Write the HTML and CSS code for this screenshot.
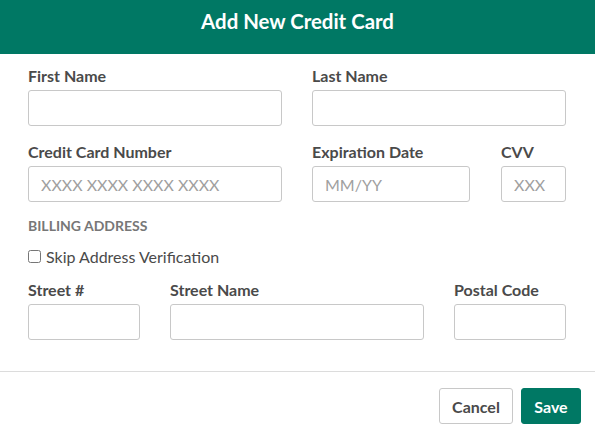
FILE: index.html
```html
<!DOCTYPE html>
<html>
<head>
<meta charset="utf-8">
<link rel="stylesheet" href="styles.css">
</head>
<body>
<div class="modal">
  <header class="modal-header">Add New Credit Card</header>
  <form class="modal-body">
    <div class="row">
      <div class="field w254"><label>First Name</label><input type="text"></div>
      <div class="field w254"><label>Last Name</label><input type="text"></div>
    </div>
    <div class="row">
      <div class="field w254"><label>Credit Card Number</label><input type="text" placeholder="XXXX XXXX XXXX XXXX"></div>
      <div class="field w158"><label>Expiration Date</label><input type="text" placeholder="MM/YY"></div>
      <div class="field w65 ml1"><label>CVV</label><input type="text" placeholder="XXX"></div>
    </div>
    <div class="section-title">BILLING ADDRESS</div>
    <label class="check"><input type="checkbox"><span>Skip Address Verification</span></label>
    <div class="row">
      <div class="field w112"><label>Street #</label><input type="text"></div>
      <div class="field w254"><label>Street Name</label><input type="text"></div>
      <div class="field w112"><label>Postal Code</label><input type="text"></div>
    </div>
  </form>
  <footer class="modal-footer">
    <button class="btn btn-default" type="button">Cancel</button>
    <button class="btn btn-primary" type="button">Save</button>
  </footer>
</div>
</body>
</html>
```
FILE: styles.css
```css
* { box-sizing: border-box; }
html, body { margin: 0; padding: 0; background: #fff; }
body { font-family: Lato, "Open Sans", sans-serif; color: #4a4a4a; }
.modal { width: 595px; }
.modal-header {
  height: 54px;
  background: #007864;
  color: #fff;
  font-weight: 700;
  font-size: 20.4px;
  display: flex;
  align-items: center;
  justify-content: center;
  padding-bottom: 12px;
}
.modal-body {
  margin: 0;
  padding: 12px 29px 31px 28px;
}
.row { display: flex; gap: 30px; }
.row + .row { margin-top: 16px; }
.field { display: flex; flex-direction: column; }
.field label {
  font-weight: 700;
  font-size: 16px;
  line-height: 20px;
  color: #4a4a4a;
  margin-bottom: 4px;
}
.field input {
  height: 36px;
  width: 100%;
  border: 1px solid #c8c8c8;
  border-radius: 3px;
  padding: 0 12px;
  font-family: Lato, sans-serif;
  font-size: 16px;
  color: #333;
  outline: none;
}
.field input::placeholder { color: #a0a0a0; }
.w254 { width: 254px; }
.w158 { width: 158px; }
.w65 { width: 65px; }
.w112 { width: 112px; }
.ml1 { margin-left: 1px; }
.section-title {
  margin-top: 16px;
  font-size: 14px;
  line-height: 16px;
  font-weight: 700;
  color: #777;
}
.check {
  margin-top: 12px;
  display: flex;
  align-items: center;
  height: 20px;
  font-size: 16px;
  color: #4a4a4a;
}
.check input { margin: 0 5px 0 0; width: 13px; height: 13px; }
.check + .row { margin-top: 14px; }
.modal-footer {
  border-top: 1px solid #dcdcdc;
  padding: 16px 14px 0 0;
  display: flex;
  justify-content: flex-end;
  gap: 8px;
}
.btn {
  height: 36px;
  border-radius: 3px;
  font-family: Lato, sans-serif;
  font-weight: 700;
  font-size: 16px;
  padding: 0;
  cursor: pointer;
}
.btn-default { width: 74px; background: #fff; border: 1px solid #c8c8c8; color: #4a4a4a; }
.btn-primary { width: 60px; background: #007864; border: 1px solid #007864; color: #fff; }
```
